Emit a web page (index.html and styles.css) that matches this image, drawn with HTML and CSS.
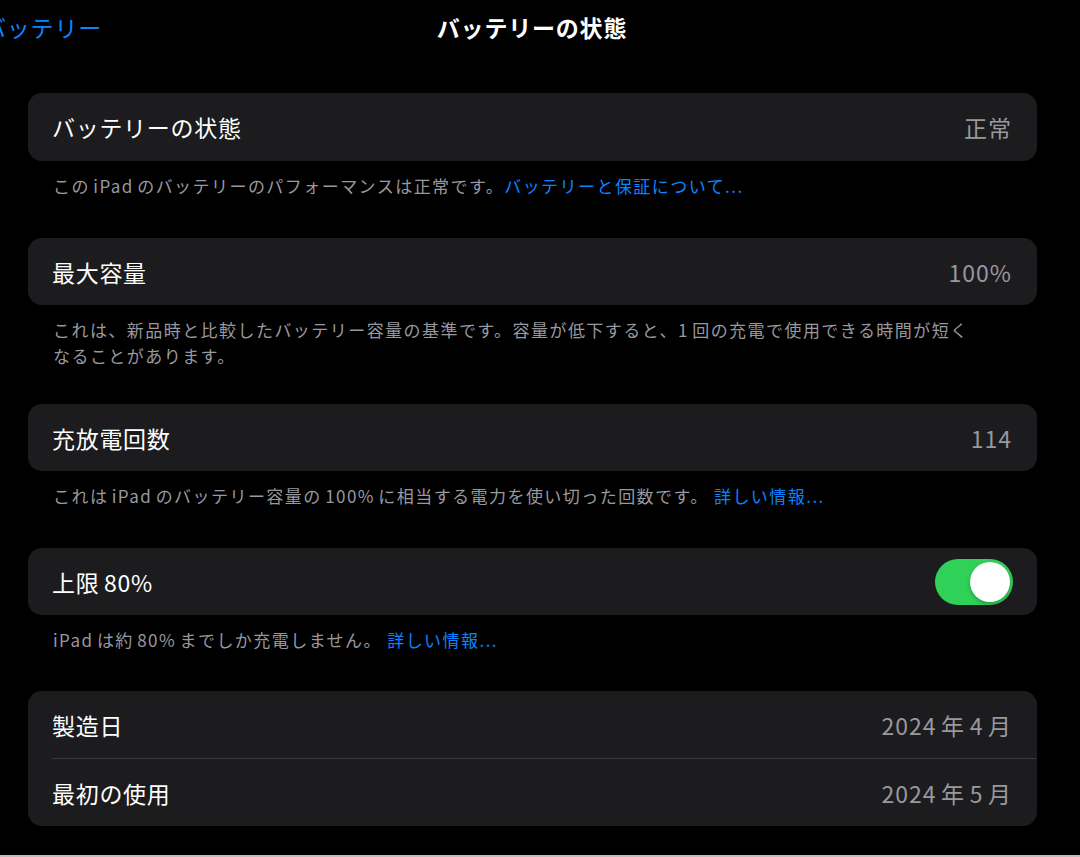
FILE: index.html
```html
<!DOCTYPE html>
<html lang="ja">
<head>
<meta charset="utf-8">
<link rel="stylesheet" href="styles.css">
</head>
<body>
<div class="screen">
  <header class="nav">
    <span class="back">バッテリー</span>
    <h1 class="title">バッテリーの状態</h1>
  </header>
  <main class="content">
    <section class="group g1">
      <div class="card">
        <div class="row tall"><span class="label">バッテリーの状態</span><span class="value">正常</span></div>
      </div>
      <p class="footer">この<span class="l">iPad</span>のバッテリーのパフォーマンスは正常です。<span class="link">バッテリーと保証について...</span></p>
    </section>
    <section class="group g2">
      <div class="card">
        <div class="row"><span class="label">最大容量</span><span class="value">100%</span></div>
      </div>
      <p class="footer">これは、新品時と比較したバッテリー容量の基準です。容量が低下すると、<span class="l r">1</span>回の充電で使用できる時間が短く<br>なることがあります。</p>
    </section>
    <section class="group g3">
      <div class="card">
        <div class="row"><span class="label">充放電回数</span><span class="value">114</span></div>
      </div>
      <p class="footer">これは<span class="l">iPad</span>のバッテリー容量の<span class="l">100%</span>に相当する電力を使い切った回数です。 <span class="link">詳しい情報...</span></p>
    </section>
    <section class="group g4">
      <div class="card">
        <div class="row"><span class="label">上限<span class="l e">80%</span></span><span class="toggle"><span class="knob"></span></span></div>
      </div>
      <p class="footer"><span class="l r">iPad</span>は約<span class="l">80%</span>までしか充電しません。 <span class="link">詳しい情報...</span></p>
    </section>
    <section class="group g5">
      <div class="card">
        <div class="row"><span class="label">製造日</span><span class="value"><span class="l r">2024</span>年<span class="l">4</span>月</span></div>
        <div class="sep"></div>
        <div class="row"><span class="label">最初の使用</span><span class="value"><span class="l r">2024</span>年<span class="l">5</span>月</span></div>
      </div>
    </section>
  </main>
  <div class="bottom-line"></div>
</div>
</body>
</html>
```

FILE: styles.css
```css
* { box-sizing: border-box; }
html, body {
  margin: 0;
  padding: 0;
  background: #000;
  width: 1080px;
  height: 857px;
  overflow: hidden;
}
body {
  font-family: "Noto Sans CJK JP", "Noto Sans", sans-serif;
  color: #fff;
}
.screen {
  position: relative;
  width: 1080px;
  height: 857px;
}
.nav {
  position: relative;
  height: 56px;
  display: flex;
  align-items: center;
  justify-content: center;
  padding-right: 16px;
}
.back {
  position: absolute;
  left: -17px;
  top: 12px;
  font-size: 23px;
  letter-spacing: 0.8px;
  line-height: 30px;
  color: #0a84ff;
}
.title {
  margin: 0;
  font-size: 23px;
  font-weight: 700;
  letter-spacing: 0.8px;
  line-height: 30px;
  margin-top: -2px;
}
.content {
  padding: 37px 43px 0 28px;
  display: flex;
  flex-direction: column;
}
.card {
  background: #1c1c1e;
  border-radius: 14px;
  overflow: hidden;
}
.row {
  height: 67px;
  display: flex;
  align-items: center;
  justify-content: space-between;
  padding: 0 25px 0 24px;
}
.row.tall { height: 68px; }
.label {
  font-size: 23px;
  color: #fff;
  letter-spacing: 0.7px;
}
.value {
  font-size: 23px;
  color: #98989f;
  letter-spacing: 1px;
}
.l { margin: 0 0.2em; }
.l.r { margin-left: 0; }
.l.e { margin-right: 0; }
.sep {
  height: 1px;
  background: #38383a;
  margin-left: 24px;
}
.footer {
  margin: 0;
  padding: 12px 20px 0 25px;
  font-size: 17px;
  letter-spacing: 1.45px;
  line-height: 26px;
  color: #98989f;
  white-space: nowrap;
}
.g1 .footer { height: 77px; }
.g2 .footer { height: 99px; }
.g3 .footer { height: 77px; }
.g4 .footer { height: 76px; }
.link { color: #0a84ff; }
.toggle {
  width: 78px;
  height: 46px;
  border-radius: 23px;
  background: #30d158;
  display: flex;
  align-items: center;
  justify-content: flex-end;
  padding: 3px;
  margin-right: -1px;
}
.knob {
  width: 40px;
  height: 40px;
  border-radius: 50%;
  background: #fff;
  box-shadow: 0 2px 4px rgba(0,0,0,0.25);
}
.bottom-line {
  position: absolute;
  left: 0;
  right: 0;
  bottom: 0;
  height: 2px;
  background: #bdbdbd;
}
```
